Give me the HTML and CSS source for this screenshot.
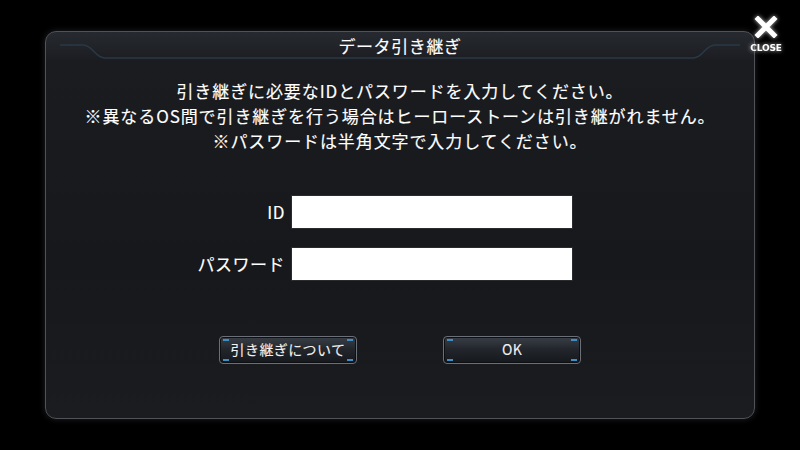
FILE: index.html
```html
<!DOCTYPE html>
<html lang="ja">
<head>
<meta charset="utf-8">
<link rel="stylesheet" href="styles.css">
</head>
<body>
<div class="screen">
  <div class="panel">
    <svg class="header-line" width="710" height="40" viewBox="0 0 710 40">
      <path d="M15 14 H38 C48 14 50 27 60 27 H648 C658 27 660 14 670 14 H695" fill="none" stroke="#2a3946" stroke-width="1.6"/>
    </svg>
    <div class="title">データ引き継ぎ</div>
    <div class="message">
      <p>引き継ぎに必要なIDとパスワードを入力してください。</p>
      <p>※異なるOS間で引き継ぎを行う場合はヒーローストーンは引き継がれません。</p>
      <p>※パスワードは半角文字で入力してください。</p>
    </div>
    <div class="form">
      <label class="label">ID</label>
      <div class="field"></div>
      <label class="label">パスワード</label>
      <div class="field"></div>
    </div>
    <div class="buttons">
      <div class="btn"><span class="c tl"></span><span class="c tr"></span><span class="c bl"></span><span class="c br"></span>引き継ぎについて</div>
      <div class="btn"><span class="c tl"></span><span class="c tr"></span><span class="c bl"></span><span class="c br"></span>OK</div>
    </div>
  </div>
  <div class="close">
    <svg width="24" height="22" viewBox="0 0 24 22"><path d="M4 3 L20 19 M20 3 L4 19" stroke="#fff" stroke-width="5" stroke-linecap="square"/></svg>
    <span>CLOSE</span>
  </div>
</div>
</body>
</html>
```
FILE: styles.css
```css
html, body {
  margin: 0;
  padding: 0;
  background: #000;
  width: 800px;
  height: 450px;
  overflow: hidden;
  font-family: "Noto Sans CJK JP", "Noto Sans", sans-serif;
  color: #fff;
}
.screen {
  position: relative;
  width: 800px;
  height: 450px;
  padding: 31px 45px 0;
  box-sizing: border-box;
}
.panel {
  position: relative;
  width: 710px;
  height: 388px;
  box-sizing: border-box;
  border: 1.5px solid #505257;
  border-radius: 11px;
  background: linear-gradient(#262a30 0px, #1b1c20 30px, #17181b 60%, #1b1c1f 100%);
  box-shadow: 0 0 6px rgba(90, 95, 105, 0.35);
  display: flex;
  flex-direction: column;
  align-items: center;
  -webkit-text-stroke: 0.15px #fff;
}
.header-line {
  position: absolute;
  left: -1.5px;
  top: -1.5px;
}
.title {
  position: relative;
  margin-top: 1px;
  height: 26px;
  line-height: 26px;
  font-size: 17px;
  font-weight: 400;
  letter-spacing: 0.6px;
}
.message {
  margin-top: 19px;
  text-align: center;
  font-size: 17px;
  font-weight: 400;
  line-height: 25px;
}
.message p {
  margin: 0;
  letter-spacing: 0.9px;
}
.form {
  align-self: flex-start;
  margin-left: 139px;
  margin-top: 42px;
  display: grid;
  grid-template-columns: 100px 282px;
  column-gap: 6px;
  row-gap: 18px;
  align-items: center;
}
.label {
  text-align: right;
  font-size: 17px;
  font-weight: 400;
  line-height: 34px;
  letter-spacing: 0.5px;
}
.field {
  height: 34px;
  background: #fff;
  border: 1px solid #2a2b2e;
  box-sizing: border-box;
}
.buttons {
  margin-top: 55px;
  display: flex;
  gap: 86px;
}
.btn {
  position: relative;
  width: 138px;
  height: 28px;
  box-sizing: border-box;
  border: 1.5px solid #6b7078;
  border-radius: 4px;
  background: linear-gradient(#3a3f47 0%, #23272d 45%, #15181c 100%);
  box-shadow: inset 0 0 0 1px #0d0f12;
  font-size: 14px;
  font-weight: 400;
  line-height: 25px;
  text-align: center;
  color: #f2f2f2;
  letter-spacing: 0.4px;
  -webkit-text-stroke: 0.1px #f2f2f2;
}
.c {
  position: absolute;
  width: 6px;
  height: 2px;
  background: #3f8fc4;
}
.tl { left: 3px; top: 2px; }
.tr { right: 3px; top: 2px; }
.bl { left: 3px; bottom: 2px; }
.br { right: 3px; bottom: 2px; }
.close {
  position: absolute;
  left: 746px;
  top: 16px;
  width: 40px;
  display: flex;
  flex-direction: column;
  align-items: center;
  filter: drop-shadow(0 0 2px rgba(255,255,255,0.7));
}
.close svg {
  display: block;
}
.close span {
  margin-top: 6px;
  font-family: "DejaVu Sans", sans-serif;
  font-weight: bold;
  font-size: 9px;
  line-height: 9px;
  letter-spacing: -0.2px;
}
```
